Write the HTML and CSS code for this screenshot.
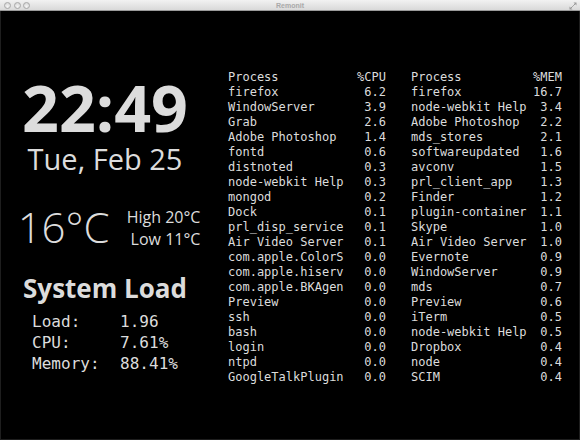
FILE: index.html
```html
<!DOCTYPE html>
<html>
<head>
<meta charset="utf-8">
<title>Remonit</title>
<link rel="stylesheet" href="styles.css">
</head>
<body>
<div class="window">
  <div class="titlebar">
    <div class="lights">
      <span class="light"></span><span class="light"></span><span class="light"></span>
    </div>
    <div class="title">Remonit</div>
    <svg class="resize" width="8" height="8" viewBox="0 0 8 8">
      <path d="M4.5 0.5 H7.5 V3.5 Z" fill="#9a9a9a"/>
      <path d="M0.5 4.5 V7.5 H3.5 Z" fill="#9a9a9a"/>
      <path d="M6.5 1.5 L4.2 3.8 M1.5 6.5 L3.8 4.2" stroke="#9a9a9a" stroke-width="1"/>
    </svg>
  </div>
  <div class="content">
    <div class="left">
      <div class="clock">22:49</div>
      <div class="date">Tue, Feb 25</div>
      <div class="weather">
        <div class="temp">16°C</div>
        <div class="range">
          <div>High 20°C</div>
          <div>Low 11°C</div>
        </div>
      </div>
      <div class="load-title">System Load</div>
      <div class="load">
        <div class="load-row"><span class="key">Load:</span><span>1.96</span></div>
        <div class="load-row"><span class="key">CPU:</span><span>7.61%</span></div>
        <div class="load-row"><span class="key">Memory:</span><span>88.41%</span></div>
      </div>
    </div>
    <div class="procs">
      <div class="ptable cpu">
        <span>Process</span><span class="num">%CPU</span>
        <span>firefox</span><span class="num">6.2</span>
        <span>WindowServer</span><span class="num">3.9</span>
        <span>Grab</span><span class="num">2.6</span>
        <span>Adobe Photoshop</span><span class="num">1.4</span>
        <span>fontd</span><span class="num">0.6</span>
        <span>distnoted</span><span class="num">0.3</span>
        <span>node-webkit Help</span><span class="num">0.3</span>
        <span>mongod</span><span class="num">0.2</span>
        <span>Dock</span><span class="num">0.1</span>
        <span>prl_disp_service</span><span class="num">0.1</span>
        <span>Air Video Server</span><span class="num">0.1</span>
        <span>com.apple.ColorS</span><span class="num">0.0</span>
        <span>com.apple.hiserv</span><span class="num">0.0</span>
        <span>com.apple.BKAgen</span><span class="num">0.0</span>
        <span>Preview</span><span class="num">0.0</span>
        <span>ssh</span><span class="num">0.0</span>
        <span>bash</span><span class="num">0.0</span>
        <span>login</span><span class="num">0.0</span>
        <span>ntpd</span><span class="num">0.0</span>
        <span>GoogleTalkPlugin</span><span class="num">0.0</span>
      </div>
      <div class="ptable mem">
        <span>Process</span><span class="num">%MEM</span>
        <span>firefox</span><span class="num">16.7</span>
        <span>node-webkit Help</span><span class="num">3.4</span>
        <span>Adobe Photoshop</span><span class="num">2.2</span>
        <span>mds_stores</span><span class="num">2.1</span>
        <span>softwareupdated</span><span class="num">1.6</span>
        <span>avconv</span><span class="num">1.5</span>
        <span>prl_client_app</span><span class="num">1.3</span>
        <span>Finder</span><span class="num">1.2</span>
        <span>plugin-container</span><span class="num">1.1</span>
        <span>Skype</span><span class="num">1.0</span>
        <span>Air Video Server</span><span class="num">1.0</span>
        <span>Evernote</span><span class="num">0.9</span>
        <span>WindowServer</span><span class="num">0.9</span>
        <span>mds</span><span class="num">0.7</span>
        <span>Preview</span><span class="num">0.6</span>
        <span>iTerm</span><span class="num">0.5</span>
        <span>node-webkit Help</span><span class="num">0.5</span>
        <span>Dropbox</span><span class="num">0.4</span>
        <span>node</span><span class="num">0.4</span>
        <span>SCIM</span><span class="num">0.4</span>
      </div>
    </div>
  </div>
</div>
</body>
</html>
```

FILE: styles.css
```css
html, body {
  margin: 0;
  padding: 0;
  background: #000;
}

.window {
  width: 580px;
  height: 440px;
  display: flex;
  flex-direction: column;
  background: #000;
  box-shadow: inset 1px 0 0 #1e1e1e, inset -1px 0 0 #1e1e1e, inset 0 -1px 0 #1e1e1e;
  overflow: hidden;
}

.titlebar {
  height: 11px;
  flex: 0 0 11px;
  background: linear-gradient(#f2f2f2, #d9d9d9);
  display: flex;
  align-items: center;
  position: relative;
  box-sizing: border-box;
  border-bottom: 1px solid #9a9a9a;
}

.lights {
  display: flex;
  gap: 2.5px;
  padding-left: 4px;
}

.light {
  width: 5px;
  height: 5px;
  border-radius: 50%;
  border: 0.5px solid #a8a8a8;
  background: radial-gradient(circle at 50% 70%, #f4f4f4, #d0d0d0);
}

.title {
  position: absolute;
  left: 0;
  right: 0;
  top: 0;
  text-align: center;
  font-family: "Liberation Sans", Arial, sans-serif;
  font-size: 7px;
  line-height: 11px;
  font-weight: bold;
  color: #a9a9a9;
}

.resize {
  position: absolute;
  right: 3px;
  top: 2px;
}

.content {
  flex: 1;
  display: flex;
  color: #dcdcdc;
}

.left {
  width: 210px;
  padding-top: 63px;
  text-align: center;
  font-family: "Open Sans", "Noto Sans", sans-serif;
}

.clock {
  font-size: 64.5px;
  line-height: 66px;
  font-weight: 700;
}

.date {
  margin-top: 4px;
  font-size: 29px;
  line-height: 29px;
}

.weather {
  margin-top: 33px;
  display: flex;
  justify-content: center;
  gap: 17px;
  padding-left: 8px;
}

.temp {
  font-size: 42px;
  line-height: 42px;
  font-weight: 300;
}

.range {
  text-align: right;
  font-size: 16px;
  line-height: 22px;
}

.load-title {
  margin-top: 25px;
  font-size: 26px;
  line-height: 27px;
  font-weight: 700;
}

.load {
  margin-top: 9px;
  display: inline-block;
  text-align: left;
  font-family: "DejaVu Sans Mono", monospace;
  font-size: 16px;
  line-height: 21px;
}

.load-row {
  display: grid;
  grid-template-columns: 88px auto;
  white-space: pre;
}

.procs {
  display: flex;
  gap: 25px;
  padding-top: 59px;
  padding-left: 18px;
}

.ptable {
  display: grid;
  grid-template-columns: auto auto;
  justify-content: space-between;
  font-family: "DejaVu Sans Mono", monospace;
  font-size: 12px;
  line-height: 15px;
  white-space: pre;
  align-content: start;
}

.ptable.cpu {
  width: 158px;
}

.ptable.mem {
  width: 151px;
}

.num {
  text-align: right;
}
```
